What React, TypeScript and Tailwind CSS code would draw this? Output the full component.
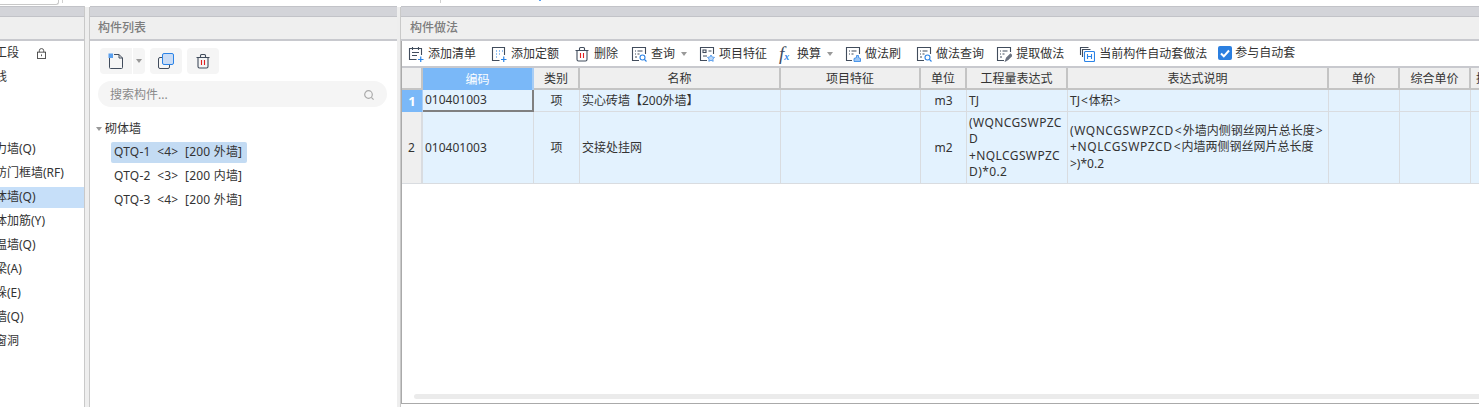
import type { ReactNode } from 'react';

const INK = '#414c5c';
const BLUE = '#2b83e6';

function Icon({ children, className = 'w-4 h-4' }: { children: ReactNode; className?: string }) {
  return (
    <svg viewBox="0 0 16 16" fill="none" className={`${className} shrink-0`} strokeWidth="1.1" stroke={INK}>
      {children}
    </svg>
  );
}

const Plus = () => <path d="M10 13.5h5.5M12.75 10.5v5.5" stroke={BLUE} strokeWidth="1.2" />;

const AddListIcon = () => (
  <Icon>
    <path d="M8.5 13.5H1.5V2.5h12v6.5" />
    <path d="M4.5 1v3M10.5 1v3M4 6.5h7M4 9.5h5" />
    <Plus />
  </Icon>
);

const AddQuotaIcon = () => (
  <Icon>
    <path d="M8.5 14.5H1.5V1.5h12v7.5" />
    <path d="M5 5h1M8 5h1M11 5h1M5 8h1M8 8h1M5 11h1" strokeWidth="1.2" stroke={BLUE} />
    <Plus />
  </Icon>
);

const TrashIcon = () => (
  <Icon>
    <path d="M1.5 4.5h13M3 4.5v9a1.5 1.5 0 0 0 1.5 1.5h7a1.5 1.5 0 0 0 1.5-1.5v-9" />
    <path d="M5.5 4.5V2.5a1 1 0 0 1 1-1h3a1 1 0 0 1 1 1v2" />
    <path d="M6.5 7v5M9.5 7v5" stroke="#e02020" />
  </Icon>
);

const QueryIcon = () => (
  <Icon>
    <path d="M8 14.5H1.5V1.5h13V8" />
    <path d="M4 5h1M6.5 5h5M4 8h1M6.5 8h2M4 11h2" />
    <circle cx="11.5" cy="11.5" r="2.5" stroke={BLUE} />
    <path d="M13.5 13.5l2 2" stroke={BLUE} />
  </Icon>
);

const FeatureIcon = () => (
  <Icon>
    <path d="M8 14.5H1.5V1.5h13V8" />
    <rect x="4" y="4" width="3" height="2.5" />
    <path d="M9.5 5h3M4 10h4" />
    <path d="M12 9l1.2 2 2.3.4-1.6 1.6.3 2.3-2.2-1-2.2 1 .3-2.3-1.6-1.6 2.3-.4z" fill="#bcd8f8" stroke={BLUE} strokeWidth="0.7" />
  </Icon>
);

const BrushIcon = () => (
  <Icon>
    <path d="M7 14.5H1.5V1.5h13V8" />
    <path d="M4 5h1M6.5 5h5M4 8h1M6.5 8h2" />
    <path d="M9 15.5v-3l2.5-1V9.5h2v2l2 1v3z" fill="#9cc6f5" stroke={BLUE} strokeWidth="0.8" />
  </Icon>
);

const ExtractIcon = () => (
  <Icon>
    <path d="M8 14.5H1.5V1.5h13V6" />
    <path d="M4 5h1M6.5 5h5M4 8h1M6.5 8h2M4 11h2" />
    <path d="M9.5 15l1-3 4-4 1.5 1.5-4 4z" fill="#6b7280" stroke="#6b7280" />
  </Icon>
);

const AutoIcon = () => (
  <Icon>
    <path d="M1.5 9V1.5h8M3.5 11V3.5h8" stroke={INK} />
    <rect x="5.5" y="5.5" width="10" height="10" rx="1" fill="#fff" stroke={BLUE} />
    <path d="M8.5 8v5M12.5 8v5M8.5 10.5h4" stroke={BLUE} />
  </Icon>
);

const Caret = ({ color = '#999' }: { color?: string }) => (
  <svg viewBox="0 0 6 4" className="w-[6px] h-[4px] shrink-0">
    <path d="M0 0h6L3 4z" fill={color} />
  </svg>
);

function Tool({ icon, label, caret, className = '' }: { icon: ReactNode; label: string; caret?: boolean; className?: string }) {
  return (
    <div className={`flex items-center shrink-0 ${className}`}>
      {icon}
      <span className="ml-[4px]">{label}</span>
      {caret && (
        <span className="ml-[6px]">
          <Caret />
        </span>
      )}
    </div>
  );
}

const sideItems = [
  { label: '施工段', lock: true },
  { label: '轴线' },
  { label: '' },
  { label: '' },
  { label: '剪力墙(Q)' },
  { label: '人防门框墙(RF)' },
  { label: '砌体墙(Q)', active: true },
  { label: '砌体加筋(Y)' },
  { label: '保温墙(Q)' },
  { label: '暗梁(A)' },
  { label: '墙垛(E)' },
  { label: '幕墙(Q)' },
  { label: '门窗洞' },
];

const components = [
  { label: 'QTQ-1  <4>  [200 外墙]', active: true },
  { label: 'QTQ-2  <3>  [200 内墙]' },
  { label: 'QTQ-3  <4>  [200 外墙]' },
];

const headers = ['编码', '类别', '名称', '项目特征', '单位', '工程量表达式', '表达式说明', '单价', '综合单价'];

function PanelTitle({ title, inset = 'pl-[9px]' }: { title?: string; inset?: string }) {
  return (
    <div className="shrink-0">
      <div className="h-[11px] bg-[#d3d4d9] border-t border-b border-[#c2c3c8]" />
      <div className={`h-[22px] bg-[#efefef] border-b-2 border-[#c8c9ce] box-content flex items-center font-medium text-[#7d7d7d] ${inset}`}>
        {title}
      </div>
    </div>
  );
}

function Splitter({ width }: { width: string }) {
  return <div className={`${width} shrink-0 mt-[1px] bg-[#eeeeee] border-r border-[#c9c9c9]`} />;
}

const cell = 'border-r border-b border-[#d9dce0] bg-[#e3f2fe] flex items-center overflow-hidden';
const head = 'border-r-2 border-b-2 border-[#c4c4c4] bg-[#efefef] flex items-center justify-center overflow-hidden pt-[2px]';

export default function App() {
  return (
    <div className="w-[1479px] h-[407px] overflow-hidden bg-white flex flex-col text-[12px] leading-none text-[#333] font-['Noto_Sans','Noto_Sans_CJK_SC',sans-serif]">
      {/* window edge above the panels */}
      <div className="h-[6px] shrink-0 flex items-start">
        <div className="w-[59px] h-[5px] border-b border-r border-[#c8c8c8] rounded-br-[3px]" />
        <div className="w-px h-[3px] ml-[3px] bg-[#d0d0d0]" />
        <div className="w-px h-[3px] ml-[377px] bg-[#d0d0d0]" />
        <div className="w-[2px] h-px ml-[98px] bg-[#5aa0ef]" />
      </div>

      <div className="flex-1 flex min-h-0">
        {/* left tree, cut off by the window edge */}
        <div className="w-[85px] shrink-0 flex flex-col overflow-hidden border-r border-[#c9c9c9]">
          <PanelTitle />
          <div>
            {sideItems.map((item, i) => (
              <div key={i} className="h-[24px] flex items-center">
                <div className={`w-full h-[21px] flex items-center whitespace-nowrap ${item.active ? 'bg-[#c6dff9]' : ''}`}>
                  <span className="-ml-[17px]">{item.label}</span>
                  {item.lock && (
                    <svg viewBox="0 0 10 12" className="w-[9px] h-[11px] ml-[18px]" fill="none" stroke="#444">
                      <rect x="0.5" y="4.5" width="9" height="7" />
                      <path d="M2.5 4.5V3a2.5 2.5 0 0 1 5 0v1.5" />
                      <path d="M5 7v2" />
                    </svg>
                  )}
                </div>
              </div>
            ))}
          </div>
        </div>
        <Splitter width="w-[5px]" />

        {/* component list */}
        <div className="w-[307px] shrink-0 flex flex-col">
          <PanelTitle title="构件列表" inset="pl-[8px]" />
          <div className="pt-[7px] px-[8px]">
            <div className="flex pl-[2px] gap-[5px]">
              <div className="flex gap-[1px]">
                <button className="w-[32px] h-[26px] bg-[#f5f5f5] rounded-l-[4px] flex items-center justify-center">
                  <svg viewBox="0 0 16 16" className="w-4 h-4" fill="none" stroke={INK}>
                    <path d="M1.5 5v9.5a1 1 0 0 0 1 1h11a1 1 0 0 0 1-1V5L11 1.5H6" />
                    <path d="M11 1.5V5h3.5" />
                    <rect x="0.5" y="0.5" width="4.5" height="4.5" fill="#5aa0ef" stroke="none" />
                  </svg>
                </button>
                <button className="w-[12px] h-[26px] bg-[#f5f5f5] rounded-r-[4px] flex items-center justify-center">
                  <Caret />
                </button>
              </div>
              <button className="w-[32px] h-[26px] bg-[#f5f5f5] rounded-[4px] flex items-center justify-center">
                <svg viewBox="0 0 16 16" className="w-4 h-4" fill="none">
                  <path d="M4.5 4.5H2a1.5 1.5 0 0 0-1.5 1.5v8A1.5 1.5 0 0 0 2 15.5h8a1.5 1.5 0 0 0 1.5-1.5v-2.5" stroke={INK} />
                  <rect x="4.5" y="0.5" width="11" height="11" rx="1.5" fill="#c9dcf6" stroke={BLUE} />
                </svg>
              </button>
              <button className="w-[32px] h-[26px] bg-[#f5f5f5] rounded-[4px] flex items-center justify-center">
                <TrashIcon />
              </button>
            </div>

            <div className="mt-[7px] h-[26px] w-[289px] rounded-full bg-[#f5f5f5] flex items-center justify-between pl-[12px] pr-[13px] pt-[1px] text-[#8a8a8a]">
              <span>搜索构件...</span>
              <svg viewBox="0 0 10 10" className="w-[10px] h-[10px]" fill="none" stroke="#aaa" strokeWidth="1.2">
                <circle cx="4.5" cy="4.5" r="3.8" />
                <path d="M7.3 7.3L9.6 9.6" />
              </svg>
            </div>

            <div className="mt-[15px] -ml-[2px] flex items-center h-[14px]">
              <Caret />
              <span className="ml-[3px]">砌体墙</span>
            </div>
            <div className="mt-[6px] ml-[13px] flex flex-col gap-[3px]">
              {components.map(c => (
                <div
                  key={c.label}
                  className={`w-[136px] h-[21px] flex items-center pl-[3px] pb-[2px] whitespace-pre rounded-[2px] tracking-[0.2px] ${c.active ? 'bg-[#c3dbf3]' : ''}`}
                >
                  {c.label}
                </div>
              ))}
            </div>
          </div>
        </div>
        <Splitter width="w-[4px]" />

        {/* method table */}
        <div className="flex-1 min-w-0 flex flex-col">
          <PanelTitle title="构件做法" />
          <div className="flex-1 min-h-0 flex flex-col border-l border-b border-[#aaaaaa] mb-[3px]">
            <div className="h-[27px] shrink-0 flex items-center pl-[6px] whitespace-nowrap overflow-hidden border-b-2 border-[#c8c9ce]">
              <Tool icon={<AddListIcon />} label="添加清单" />
              <Tool icon={<AddQuotaIcon />} label="添加定额" className="ml-[15px]" />
              <Tool icon={<TrashIcon />} label="删除" className="ml-[15px]" />
              <Tool icon={<QueryIcon />} label="查询" caret className="ml-[13px]" />
              <Tool icon={<FeatureIcon />} label="项目特征" className="ml-[12px]" />
              <div className="flex items-center ml-[12px] shrink-0">
                <span className="w-[14px] font-['Liberation_Serif',serif] italic text-[19px] text-[#414c5c]">
                  f<span className="text-[10px] font-bold text-[#2b83e6]">x</span>
                </span>
                <span className="ml-[4px]">换算</span>
                <span className="ml-[6px]">
                  <Caret />
                </span>
              </div>
              <Tool icon={<BrushIcon />} label="做法刷" className="ml-[12px]" />
              <Tool icon={<QueryIcon />} label="做法查询" className="ml-[15px]" />
              <Tool icon={<ExtractIcon />} label="提取做法" className="ml-[12px]" />
              <Tool icon={<AutoIcon />} label="当前构件自动套做法" className="ml-[15px]" />
              <label className="flex items-center ml-[11px] -mt-[2px]">
                <span className="w-[14px] h-[14px] rounded-[2px] bg-[#2b7fe0] flex items-center justify-center">
                  <svg viewBox="0 0 12 12" className="w-[12px] h-[12px]" fill="none" stroke="#fff" strokeWidth="2">
                    <path d="M2 6.5l2.8 2.8L10 3.5" />
                  </svg>
                </span>
                <span className="ml-[3px]">参与自动套</span>
              </label>
            </div>

            <div className="flex-1 min-h-0 overflow-hidden">
              <div className="grid w-max grid-cols-[21px_111px_46px_201px_140px_46px_101px_261px_71px_71px_60px] grid-rows-[22px_22px_72px]">
                <div className={head} />
                {headers.map((h, i) => (
                  <div key={h} className={i === 0 ? 'bg-[#7ab8f8] text-white flex items-center justify-center pt-[2px] border-r-2 border-[#a8cdf5]' : head}>
                    {h}
                  </div>
                ))}
                <div className={`${head} !justify-start pl-[5px]`}>措施项目</div>

                <div className="bg-[#7ab8f8] text-white font-bold text-[13px] flex items-center justify-center border-r border-[#a8cdf5]">1</div>
                <div className="bg-[#e3f2fe] border-r-2 border-b-2 border-[#808080] flex items-center pl-[2px]">010401003</div>
                <div className={`${cell} justify-center`}>项</div>
                <div className={`${cell} pl-[2px]`}>实心砖墙【200外墙】</div>
                <div className={cell} />
                <div className={`${cell} justify-center`}>m3</div>
                <div className={`${cell} pl-[2px]`}>TJ</div>
                <div className={`${cell} pl-[2px]`}>
                  TJ<span className="mx-[1px]">&lt;</span>体积<span className="mx-[1px]">&gt;</span>
                </div>
                <div className={cell} />
                <div className={cell} />
                <div className={cell} />

                <div className={`${head} !pt-0 !border-b !border-[#d9dce0]`}>2</div>
                <div className={`${cell} pl-[2px]`}>010401003</div>
                <div className={`${cell} justify-center`}>项</div>
                <div className={`${cell} pl-[2px]`}>交接处挂网</div>
                <div className={cell} />
                <div className={`${cell} justify-center`}>m2</div>
                <div className={`${cell} pl-[2px] leading-[16.5px] tracking-[0.4px]`}>
                  <div>
                    (WQNCGSWPZC
                    <br />
                    D
                    <br />
                    +NQLCGSWPZC
                    <br />
                    D)*0.2
                  </div>
                </div>
                <div className={`${cell} pl-[2px] leading-[16.5px]`}>
                  <div>
                    <span className="tracking-[0.55px]">(WQNCGSWPZCD</span>
                    <span className="mx-[1px]">&lt;</span>外墙内侧钢丝网片总长度<span className="mx-[1px]">&gt;</span>
                    <br />
                    <span className="tracking-[0.6px]">+NQLCGSWPZCD</span>
                    <span className="mx-[1px]">&lt;</span>内墙两侧钢丝网片总长度
                    <br />
                    &gt;)*0.2
                  </div>
                </div>
                <div className={cell} />
                <div className={cell} />
                <div className={cell} />
              </div>
            </div>

            <div className="h-[5px] shrink-0 ml-[12px] mb-[4px] bg-[#ebebeb] rounded-l-full" />
          </div>
        </div>
      </div>
    </div>
  );
}
